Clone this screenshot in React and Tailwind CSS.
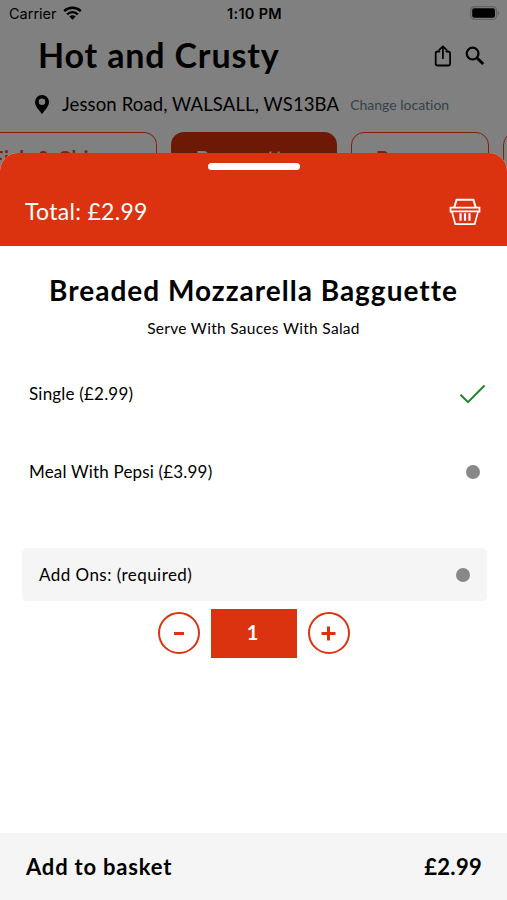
const options = [
    { id: 1, label: 'Single (£2.99)', selected: true, tracking: 'tracking-[0.2px]' },
    { id: 2, label: 'Meal With Pepsi (£3.99)', selected: false, tracking: 'tracking-[0.18px]' },
];

function StatusBar() {
    return (
        <div className="flex items-center h-7 pl-[9px] pr-[7px] font-['Inter',sans-serif] text-[14.5px] text-black">
            <div className="flex flex-1 items-center gap-[6px]">
                <span>Carrier</span>
                <svg className="-mt-[2px]" width="19" height="14" viewBox="0 0 19 14" fill="none" stroke="black" strokeWidth="2.4">
                    <path d="M1.2 5.1a11.8 11.8 0 0 1 16.6 0" />
                    <path d="M4.2 8.3a7.5 7.5 0 0 1 10.6 0" />
                    <path d="M9.5 13.7 6.4 10.6a4.4 4.4 0 0 1 6.2 0z" fill="black" stroke="none" />
                </svg>
            </div>
            <span className="font-semibold tracking-[0.3px]">1:10 PM</span>
            <div className="flex flex-1 justify-end">
                <svg className="-mt-[2px]" width="30" height="14" viewBox="0 0 30 14">
                    <rect x="0.7" y="0.7" width="25.8" height="12.6" rx="3.6" fill="none" stroke="#636363" strokeWidth="1.2" />
                    <rect x="2.2" y="2.2" width="22.8" height="9.6" rx="2" fill="black" />
                    <path d="M27.8 4.7c1.9.7 1.9 3.9 0 4.6z" fill="#636363" />
                </svg>
            </div>
        </div>
    );
}

function ShopHeader() {
    return (
        <>
            <div className="flex items-center h-[55px] pl-[38px] pr-[22px]">
                <h1 className="flex-1 pb-[2px] text-[34px] font-bold leading-none tracking-[0.85px] whitespace-nowrap">Hot and Crusty</h1>
                <svg width="18" height="22" viewBox="0 0 18 22" fill="none" stroke="black" strokeWidth="1.8" strokeLinecap="round" strokeLinejoin="round">
                    <path d="M5.4 6.5H3.6a2 2 0 0 0-1.9 1.9v10.2a2 2 0 0 0 1.9 1.9h10.6a2 2 0 0 0 1.9-1.9V8.4a2 2 0 0 0-1.9-1.9h-1.8" />
                    <path d="M8.9 13.2V1.3M5.2 4.8l3.7-3.5 3.7 3.5" />
                </svg>
                <svg className="ml-[13px]" width="20" height="20" viewBox="0 0 20 20" fill="none" stroke="black">
                    <circle cx="7.6" cy="7.6" r="5.9" strokeWidth="2.2" />
                    <path d="m11.8 11.8 6.4 6.2" strokeWidth="2.9" />
                </svg>
            </div>
            <div className="flex items-center h-[42px] pl-[35px] whitespace-nowrap">
                <svg width="14" height="19" viewBox="0 0 14 19">
                    <path fillRule="evenodd" d="M7 0a7 7 0 0 1 7 7c0 4.5-4.4 8.5-7 12C4.4 15.5 0 11.5 0 7a7 7 0 0 1 7-7zm0 3.5a3.3 3.3 0 1 0 0 6.6 3.3 3.3 0 0 0 0-6.6z" />
                </svg>
                <span className="ml-[13px] pt-[1px] text-[18.5px] tracking-[0.12px]">Jesson Road, WALSALL, WS13BA</span>
                <span className="ml-[11px] text-[14px] text-[#36424a] [font-variant-ligatures:none]">Change location</span>
            </div>
        </>
    );
}

function CategoryTabs() {
    return (
        <div className="flex w-[700px] h-14 mt-[7px] gap-[14px] text-[20px] font-bold text-[#85200f] whitespace-nowrap">
            <div className="w-[157px] shrink-0 border-[1.5px] border-l-0 border-[#85200f] rounded-r-[13px] pt-[10px]">
                <span className="-ml-[8px] tracking-[0.7px]">Fish &amp; Chips</span>
            </div>
            <div className="w-[166px] shrink-0 bg-[#6e1806] rounded-[13px] pt-[11px] pl-[25px] tracking-[0.8px] text-[#808080]">Bagguettes</div>
            <div className="w-[138px] shrink-0 border-[1.5px] border-[#85200f] rounded-[13px] pt-[10px] pl-[24px]">Burgers</div>
            <div className="w-[138px] shrink-0 border-[1.5px] border-[#85200f] rounded-[13px]" />
        </div>
    );
}

function BasketIcon() {
    return (
        <svg width="32" height="28" viewBox="0 0 32 28" fill="none" stroke="white" strokeWidth="2">
            <path d="M5.2 9.6 7.6 1.7h16.8l2.4 7.9" />
            <path d="M1.5 9.6h29v4h-1.4l-3.4 12.5H6.3L2.9 13.6H1.5zM2.5 13.3h27" strokeWidth="1.7" />
            <path d="M11.5 15.2v7.5M16 15.2v7.5M20.5 15.2v7.5" strokeWidth="2.2" />
        </svg>
    );
}

function RoundButton({ children, label }) {
    return (
        <button aria-label={label} className="flex items-center justify-center size-[42px] mb-[1px] rounded-full border-2 border-[#db330f]">
            <svg width="16" height="16" viewBox="0 0 16 16" stroke="#db330f" strokeWidth="3" fill="none">{children}</svg>
        </button>
    );
}

export default function App() {
    return (
        <div className="relative w-[507px] h-[900px] overflow-hidden bg-[#808080] font-['Lato','Open_Sans',sans-serif] text-black">
            <StatusBar />
            <ShopHeader />
            <CategoryTabs />

            {/* Item sheet */}
            <div className="absolute inset-x-0 bottom-0 top-[153px] flex flex-col rounded-t-[18px] overflow-hidden bg-white">
                <div className="h-[93px] shrink-0 bg-[#db330f] text-white">
                    <div className="w-[92px] h-[7px] mx-auto translate-y-[10px] rounded-full bg-white" />
                    <div className="flex items-center justify-between h-[104px] pl-[25px] pr-[26px]">
                        <span className="pb-[2px] text-[23px] tracking-[0.3px]">Total: £2.99</span>
                        <BasketIcon />
                    </div>
                </div>

                <div className="flex flex-col flex-1">
                    <h2 className="mt-[27px] text-center text-[28px] leading-[34px] font-bold tracking-[1px] whitespace-nowrap">Breaded Mozzarella Bagguette</h2>
                    <p className="mt-[11px] text-center text-[15.5px] leading-5 tracking-[0.3px]">Serve With Sauces With Salad</p>

                    <div className="mt-[17px]">
                        {options.map((item) => (
                            <div key={item.id} className={`flex items-center justify-between h-[78px] pl-[29px] text-[17px] ${item.tracking}`}>
                                <span>{item.label}</span>
                                {item.selected ? (
                                    <svg className="mr-[21px]" width="27" height="20" viewBox="0 0 27 20" fill="none" stroke="#218329" strokeWidth="2">
                                        <path d="m1.5 10.7 7.5 7.5L25.5 1.5" />
                                    </svg>
                                ) : (
                                    <span className="size-[14px] mr-[27px] rounded-full bg-[#888]" />
                                )}
                            </div>
                        ))}
                    </div>

                    <div className="flex items-center justify-between h-[53px] mt-[37px] ml-[22px] mr-[20px] pl-[17px] pr-[17px] rounded-[5px] bg-[#f5f5f5] text-[17px]">
                        <span className="pt-[1px] tracking-[0.45px]">Add Ons: (required)</span>
                        <span className="size-[14px] rounded-full bg-[#888]" />
                    </div>

                    <div className="flex items-center justify-center gap-[11px] mt-[8px]">
                        <RoundButton label="Decrease">
                            <path d="M3 8.5h10" />
                        </RoundButton>
                        <div className="flex items-center justify-center w-[86px] h-[49px] pb-[3px] pr-[2px] bg-[#db330f] text-white text-[20px] font-bold">1</div>
                        <RoundButton label="Increase">
                            <path d="M0.5 8.5h14M7.5 1.5v14" />
                        </RoundButton>
                    </div>
                </div>

                <div className="flex items-center justify-between h-[67px] shrink-0 pl-[26px] pr-[25px] pb-[1px] bg-[#f5f5f5] text-[22px] font-bold">
                    <span className="tracking-[0.8px]">Add to basket</span>
                    <span className="tracking-[0.3px]">£2.99</span>
                </div>
            </div>
        </div>
    );
}
